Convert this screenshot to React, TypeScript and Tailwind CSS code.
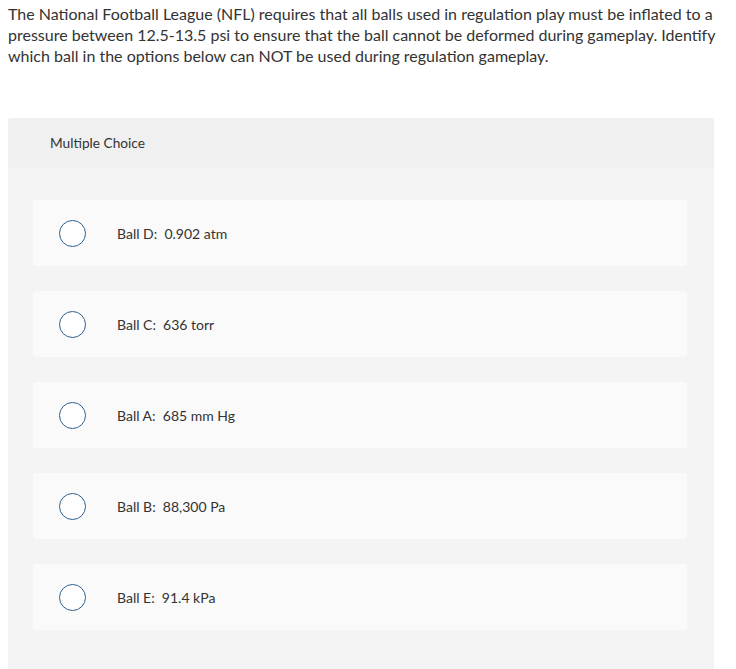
import React from "react";

const options = [
  "Ball D:  0.902 atm",
  "Ball C:  636 torr",
  "Ball A:  685 mm Hg",
  "Ball B:  88,300 Pa",
  "Ball E:  91.4 kPa",
];

export default function App() {
  return (
    <div
      className="min-h-[669px] bg-white text-[#333333]"
      style={{ fontFamily: "Lato, 'Open Sans', sans-serif" }}
    >
      <p className="w-[720px] pl-2 pt-[3px] text-[16px] leading-[21px] text-[#333]">
        The National Football League (NFL) requires that all balls used in regulation play must be inflated to a
        pressure between 12.5-13.5 psi to ensure that the ball cannot be deformed during gameplay. Identify which
        ball in the options below can NOT be used during regulation gameplay.
      </p>

      <div className="ml-2 mt-[52px] w-[706px] overflow-hidden rounded-t-[3px] bg-[#f4f4f4] pb-10">
        <div className="flex h-[50px] items-center bg-[#f0f0f0] pl-[42px] text-[13.7px] text-[#333]">
          Multiple Choice
        </div>
        <div className="flex flex-col gap-[25px] pl-[25px] pr-[27px] pt-[32px]">
          {options.map((o) => (
            <div
              key={o}
              className="flex h-[66px] items-center rounded-[4px] bg-[#fafafa] pl-[26px]"
            >
              <span className="h-[27px] w-[27px] shrink-0 rounded-full border-[1.5px] border-[#2f5f8c] bg-white" />
              <span className="ml-[31px] whitespace-pre text-[14px] text-[#333]">{o}</span>
            </div>
          ))}
        </div>
      </div>
    </div>
  );
}
